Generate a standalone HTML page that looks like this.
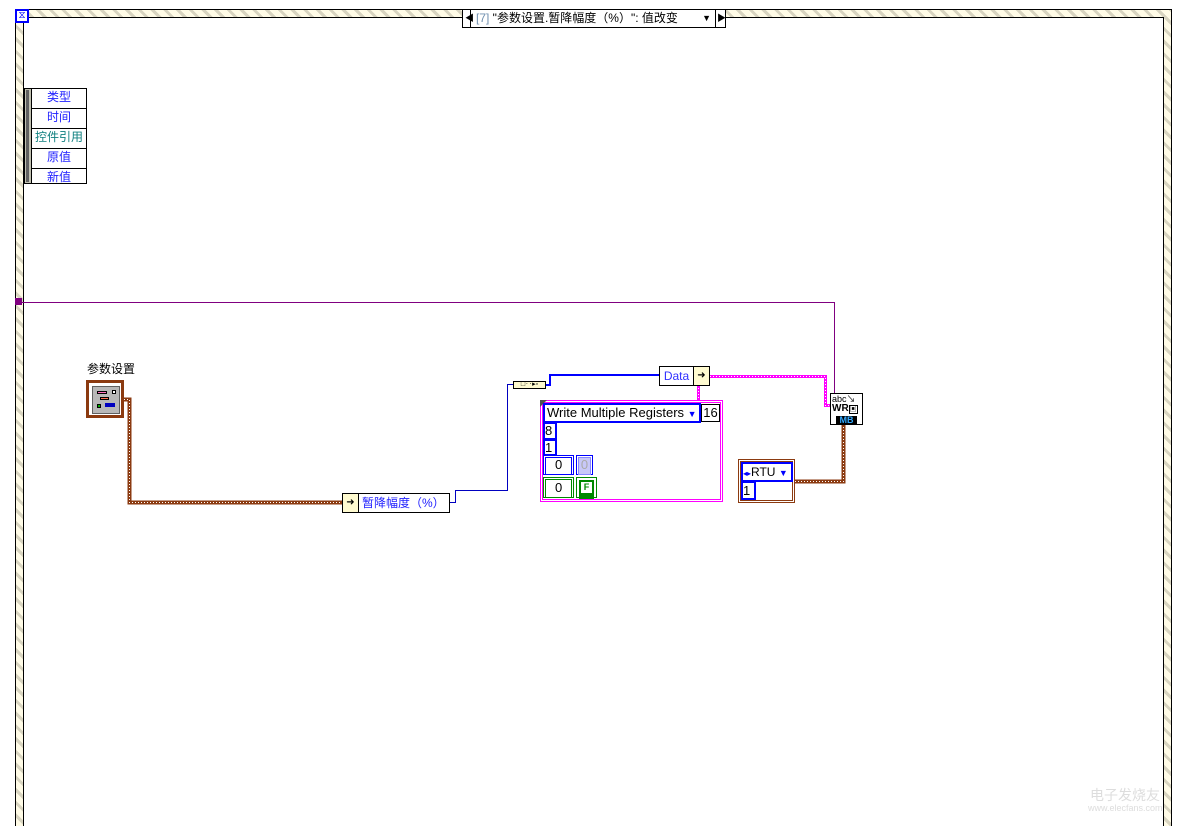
<!DOCTYPE html>
<html><head><meta charset="utf-8"><style>
html,body{margin:0;width:1196px;height:826px;overflow:hidden}
body{background:#fff;position:relative;font-family:"Liberation Sans","Noto Sans CJK SC",sans-serif}
.a{position:absolute;box-sizing:border-box}
.str{background:repeating-linear-gradient(45deg,#fffbe6 0 6px,#d8d4c0 6px 9px)}
.t{font-size:12px;line-height:17px;color:#2020ff;text-align:center}
</style></head><body>
<!-- frame -->
<div class="a str" style="left:15px;top:9px;width:1157px;height:817px;border:1px solid #000;border-bottom:none"></div>
<div class="a" style="left:23px;top:17px;width:1141px;height:809px;background:#fff;border:1px solid #000;border-bottom:none"></div>
<div class="a" style="left:15px;top:9px;width:14px;height:14px;background:#0000ff;padding:2px"><div style="width:10px;height:10px;background:#fff;color:#00f;font-size:10px;line-height:10px;text-align:center">⧖</div></div>
<!-- selector -->
<div class="a" style="left:462px;top:9px;width:264px;height:19px;background:#fff;border:1px solid #000"></div>
<div class="a" style="left:465px;top:12px;font-size:9px;line-height:12px">◀</div>
<div class="a" style="left:470px;top:10px;width:246px;height:17px;border-left:1px solid #000;border-right:1px solid #000;font-size:12px;line-height:17px;padding-left:5px"><span style="color:#7090b0">[7]</span> "参数设置.暂降幅度（%）": 值改变<span style="position:absolute;right:4px;font-size:9px">▼</span></div>
<div class="a" style="left:717px;top:12px;font-size:9px;line-height:12px">▶</div>
<!-- event data node -->
<div class="a" style="left:24px;top:88px;width:8px;height:96px;background:#c0c0b0;border:1px solid #000;border-right:none"><div style="margin:1px 0 0 1px;width:3px;height:92px;background:#606060"></div></div>
<div class="a" style="left:31px;top:88px;width:56px;height:96px;border:1px solid #000">
<div class="t" style="height:19px;border-bottom:1px solid #000">类型</div>
<div class="t" style="height:19px;border-bottom:1px solid #000">时间</div>
<div class="t" style="height:19px;border-bottom:1px solid #000;color:#108080">控件引用</div>
<div class="t" style="height:19px;border-bottom:1px solid #000">原值</div>
<div class="t" style="height:17px">新值</div></div>
<!-- wires -->
<svg class="a" style="left:0;top:0" width="1196" height="826">
<g fill="none">
<path d="M15 302.5H834.5V393" stroke="#800080" stroke-width="1"/>
<path d="M124 399.5H129.5V502.5H342" stroke="#8b3a10" stroke-width="4"/>
<path d="M124 399.5H129.5V502.5H342" stroke="#fff" stroke-width="1" stroke-dasharray="1 2"/>
<path d="M449 502.5H455.5V490.5H507.5V384.5H513" stroke="#0000c0" stroke-width="1"/>
<path d="M545 385H550V375H659" stroke="#0000ff" stroke-width="2"/>
<path d="M710 376.5H825.5V405.5H830M698.5 385V400" stroke="#ff00ff" stroke-width="3"/>
<path d="M710 376.5H825.5V405.5H830M698.5 385V400" stroke="#fff" stroke-width="1" stroke-dasharray="1 2"/>
<path d="M843.5 424V481.5H794" stroke="#8b3a10" stroke-width="4"/>
<path d="M843.5 424V481.5H794" stroke="#fff" stroke-width="1" stroke-dasharray="1 2"/>
</g>
<rect x="15" y="298" width="7" height="7" fill="#800080"/>
</svg>
<!-- 参数设置 -->
<div class="a" style="left:87px;top:362px;font-size:12px;line-height:15px">参数设置</div>
<div class="a" style="left:86px;top:380px;width:38px;height:38px;border:3px solid #8b3a10;background:#fff;padding:3px"><div style="width:26px;height:26px;background:#b8b8b8;border:1px solid #606060;position:relative">
<div class="a" style="left:4px;top:4px;width:10px;height:3px;background:#ff70c0;border:1px solid #000"></div>
<div class="a" style="left:19px;top:3px;width:4px;height:4px;background:#fff;border:1px solid #000"></div>
<div class="a" style="left:7px;top:10px;width:9px;height:3px;background:#ff7050;border:1px solid #000"></div>
<div class="a" style="left:4px;top:17px;width:4px;height:4px;background:#0a0;border:1px solid #000"></div>
<div class="a" style="left:12px;top:16px;width:10px;height:4px;background:#0000c0"></div></div></div>
<!-- unbundle -->
<div class="a" style="left:342px;top:493px;width:108px;height:20px;border:1px solid #000;background:#fff">
<div style="position:absolute;left:0;top:0;width:15px;height:18px;background:#fffbd0;border-right:1px solid #000;font-size:10px;line-height:18px;text-align:center">➜</div>
<div style="position:absolute;left:19px;top:0;font-size:12px;line-height:18px;color:#2020ff">暂降幅度（%）</div></div>
<!-- small node -->
<div class="a" style="left:513px;top:381px;width:33px;height:8px;background:#fffbd0;border:1px solid #000;font-size:7px;line-height:6px;text-align:center">□‥▸▫</div>
<!-- Data -->
<div class="a" style="left:659px;top:366px;width:35px;height:20px;border:1px solid #000;background:#fff;font-size:12px;line-height:18px;color:#3030ff;text-align:center">Data</div>
<div class="a" style="left:693px;top:366px;width:17px;height:20px;border:1px solid #000;background:#fffbd0;font-size:10px;line-height:18px;text-align:center">➜</div>
<!-- cluster -->
<div class="a" style="left:540px;top:400px;width:183px;height:102px;border:3px double #ff00ff"></div>
<div class="a" style="left:540px;top:400px;width:0;height:0;border-top:7px solid #505050;border-right:7px solid transparent"></div>
<div class="a" style="left:543px;top:403px;width:158px;height:20px;border:2px solid #0000ff;font-size:13px;line-height:16px;padding-left:2px;background:#fff">Write Multiple Registers <span style="color:#0000ff;font-size:9px">▼</span></div>
<div class="a" style="left:701px;top:404px;width:19px;height:18px;border:1px solid #000;font-size:13px;line-height:16px;text-align:center">16</div>
<div class="a" style="left:543px;top:422px;width:14px;height:18px;border:2px solid #0000ff;font-size:13px;line-height:14px">8</div>
<div class="a" style="left:543px;top:439px;width:14px;height:17px;border:2px solid #0000ff;font-size:13px;line-height:14px">1</div>
<div class="a" style="left:543px;top:455px;width:31px;height:20px;border:1px solid #00f;padding:1px"><div style="border:1px solid #00f;height:16px;font-size:13px;line-height:14px;padding-left:9px;color:#000">0</div></div>
<div class="a" style="left:576px;top:455px;width:17px;height:20px;border:1px solid #00f;padding:1px"><div style="border:1px solid #88f;background:#c8c8f8;height:16px;font-size:13px;line-height:14px;text-align:center;color:#aaa">0</div></div>
<div class="a" style="left:543px;top:477px;width:31px;height:21px;border:1px solid #080;padding:1px"><div style="border:1px solid #080;height:17px;font-size:13px;line-height:15px;padding-left:9px">0</div></div>
<div class="a" style="left:576px;top:477px;width:21px;height:21px;border:1px solid #080;padding:2px"><div style="background:#080;height:15px;padding:2px"><div style="background:#fff;height:11px;font-size:9px;font-weight:bold;line-height:11px;text-align:center;color:#080">F</div></div></div>
<!-- RTU -->
<div class="a" style="left:738px;top:459px;width:57px;height:44px;border:3px double #8b3a10"></div>
<div class="a" style="left:741px;top:462px;width:52px;height:20px;border:2px solid #00f;font-size:12px;line-height:16px;background:#fff"><span style="color:#00f;font-size:8px">◂▸</span>RTU <span style="color:#00f;font-size:9px">▼</span></div>
<div class="a" style="left:741px;top:481px;width:15px;height:19px;border:2px solid #00f;font-size:13px;line-height:15px">1</div>
<!-- MB -->
<div class="a" style="left:830px;top:393px;width:33px;height:32px;border:1px solid #000;background:#fff;padding:1px">
<div style="font-size:9px;line-height:9px">abc↘</div>
<div style="font-size:10px;font-weight:bold;line-height:10px">WR<span style="font-size:7px;border:1px solid #000">▣</span></div>
<div style="margin:1px 4px 0;background:#000;color:#3af;font-size:9px;font-weight:bold;line-height:9px;text-align:center">MB</div></div>
<!-- watermark -->
<div class="a" style="left:1090px;top:785px;font-size:14px;color:#ddd">电子发烧友</div>
<div class="a" style="left:1088px;top:803px;font-size:9px;color:#ddd">www.elecfans.com</div>
</body></html>
